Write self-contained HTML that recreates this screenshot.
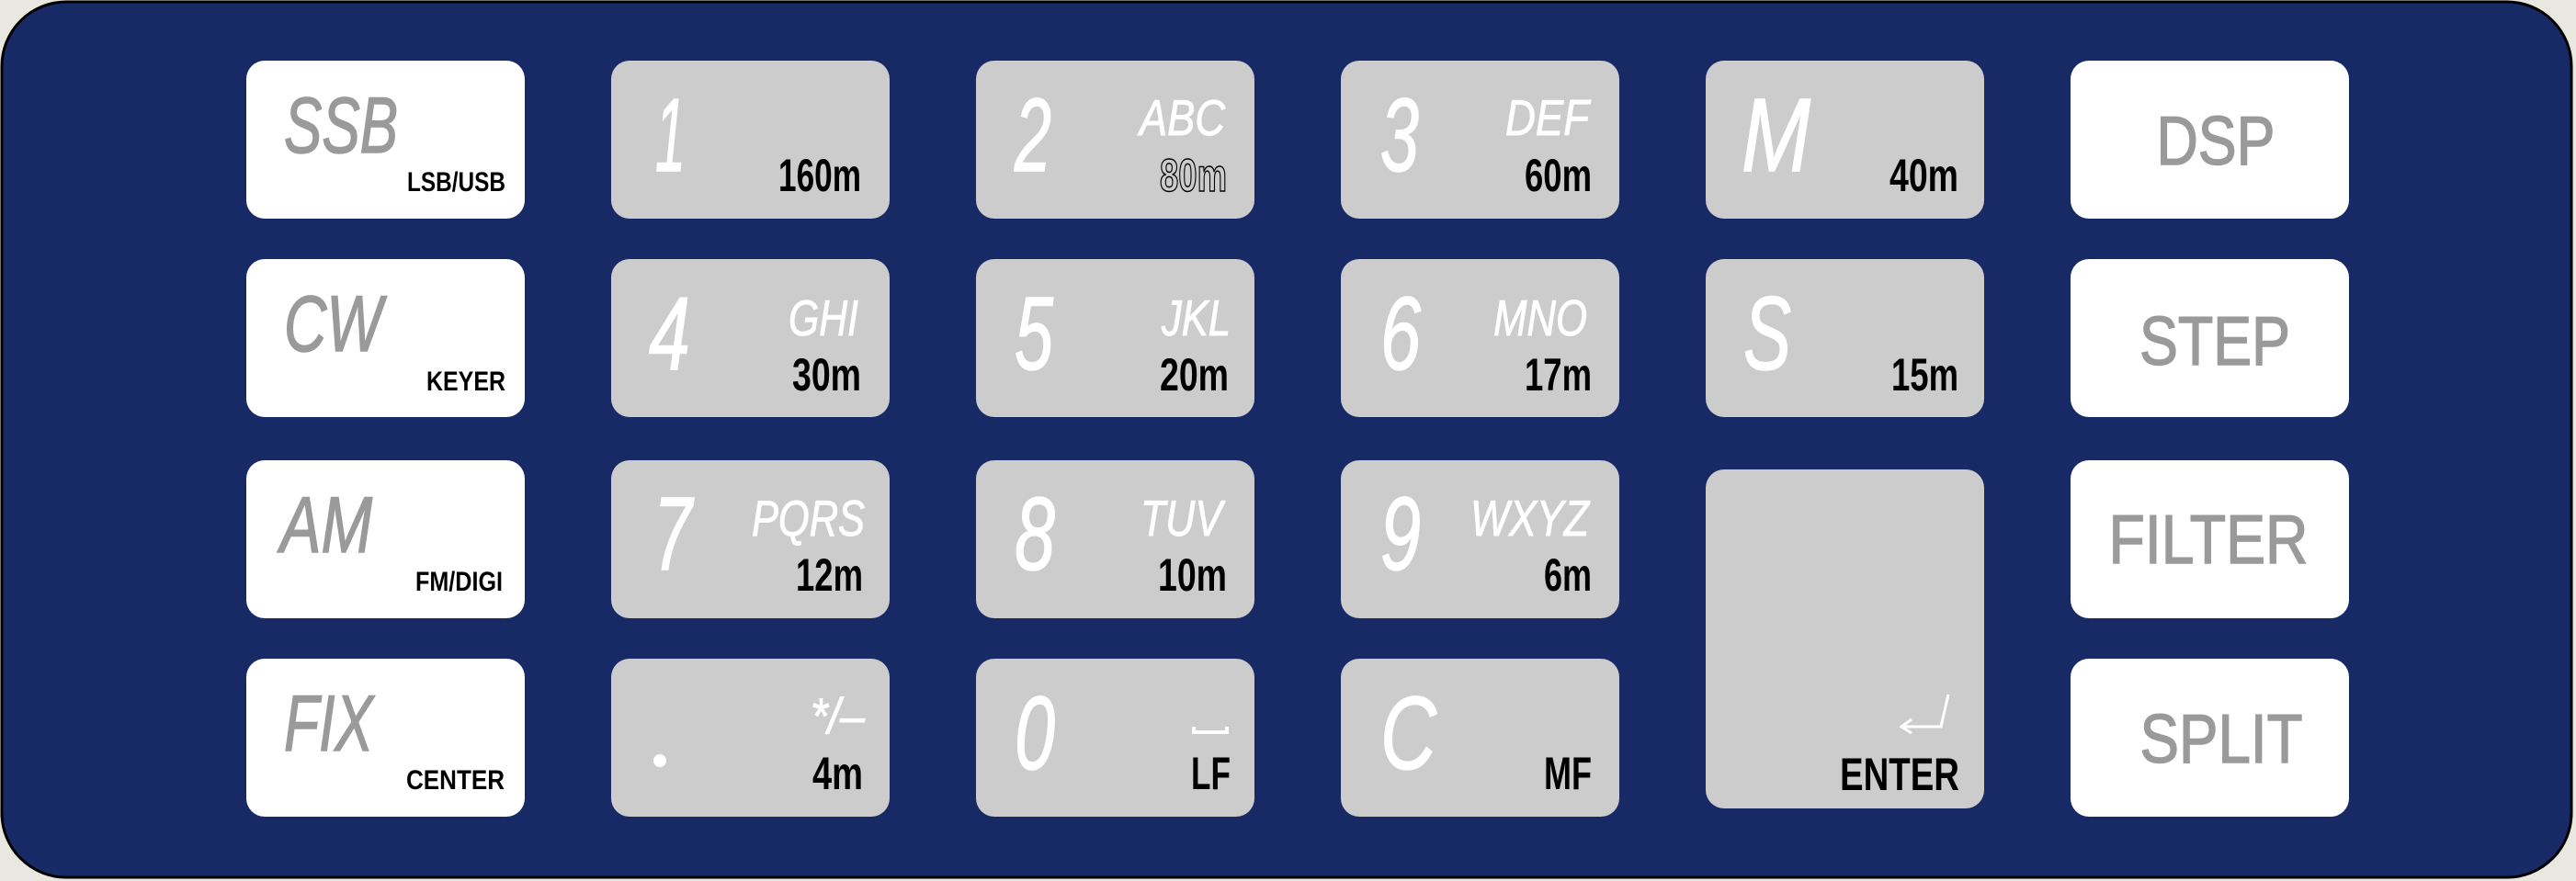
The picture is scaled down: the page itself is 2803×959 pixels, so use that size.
<!DOCTYPE html>
<html><head><meta charset="utf-8"><style>
html,body{margin:0;padding:0;background:#e8e8e0;}
svg{display:block;}
text{font-family:"Liberation Sans",sans-serif;}
.big{font-size:86px;font-style:italic;fill:#9a9a9a;stroke:#9a9a9a;stroke-width:1.5;}
.sub{font-size:30px;font-weight:bold;fill:#000;}
.dig{font-size:113px;font-style:italic;fill:#fff;stroke:#fff;stroke-width:1.5;}
.let{font-size:55px;font-style:italic;fill:#fff;stroke:#fff;stroke-width:1;}
.band{font-size:50px;font-weight:bold;fill:#000;}
.rt{font-size:75px;fill:#9a9a9a;stroke:#9a9a9a;stroke-width:1.5;}
.w{fill:#fff;}
.g{fill:#cccccc;}
</style></head><body>
<svg width="2803" height="959" viewBox="0 0 2803 959" xmlns="http://www.w3.org/2000/svg">
<rect x="0" y="0" width="2803" height="959" fill="#e8e8e0"/>
<rect x="2" y="2" width="2796" height="953" rx="70" ry="70" fill="#172a66" stroke="#000" stroke-width="3"/>

<rect class="w" x="268" y="66" width="303" height="172" rx="20"/>
<rect class="w" x="268" y="282" width="303" height="172" rx="20"/>
<rect class="w" x="268" y="501" width="303" height="172" rx="20"/>
<rect class="w" x="268" y="717" width="303" height="172" rx="20"/>
<text class="big" x="309" y="166" textLength="124" lengthAdjust="spacingAndGlyphs">SSB</text>
<text class="sub" x="550" y="208" text-anchor="end" textLength="107" lengthAdjust="spacingAndGlyphs">LSB/USB</text>
<text class="big" x="309" y="382" textLength="107" lengthAdjust="spacingAndGlyphs">CW</text>
<text class="sub" x="550" y="425" text-anchor="end" textLength="86" lengthAdjust="spacingAndGlyphs">KEYER</text>
<text class="big" x="305" y="601" textLength="100" lengthAdjust="spacingAndGlyphs">AM</text>
<text class="sub" x="547" y="643" text-anchor="end" textLength="95" lengthAdjust="spacingAndGlyphs">FM/DIGI</text>
<text class="big" x="309" y="817" textLength="97" lengthAdjust="spacingAndGlyphs">FIX</text>
<text class="sub" x="549" y="859" text-anchor="end" textLength="107" lengthAdjust="spacingAndGlyphs">CENTER</text>

<g class="g">
<rect x="665" y="66" width="303" height="172" rx="20"/>
<rect x="1062" y="66" width="303" height="172" rx="20"/>
<rect x="1459" y="66" width="303" height="172" rx="20"/>
<rect x="1856" y="66" width="303" height="172" rx="20"/>
<rect x="665" y="282" width="303" height="172" rx="20"/>
<rect x="1062" y="282" width="303" height="172" rx="20"/>
<rect x="1459" y="282" width="303" height="172" rx="20"/>
<rect x="1856" y="282" width="303" height="172" rx="20"/>
<rect x="665" y="501" width="303" height="172" rx="20"/>
<rect x="1062" y="501" width="303" height="172" rx="20"/>
<rect x="1459" y="501" width="303" height="172" rx="20"/>
<rect x="1856" y="511" width="303" height="369" rx="20"/>
<rect x="665" y="717" width="303" height="172" rx="20"/>
<rect x="1062" y="717" width="303" height="172" rx="20"/>
<rect x="1459" y="717" width="303" height="172" rx="20"/>
</g>

<text class="dig" x="713" y="186" textLength="33" lengthAdjust="spacingAndGlyphs">1</text>
<text class="band" x="937" y="208" text-anchor="end" textLength="90" lengthAdjust="spacingAndGlyphs">160m</text>
<text class="dig" x="1104" y="186" textLength="40" lengthAdjust="spacingAndGlyphs">2</text>
<text class="let" x="1333" y="147" text-anchor="end" textLength="93" lengthAdjust="spacingAndGlyphs">ABC</text>
<text class="band" x="1335" y="208" text-anchor="end" textLength="73" lengthAdjust="spacingAndGlyphs" style="fill:#cccccc;stroke:#000;stroke-width:1.5">80m</text>
<text class="dig" x="1502" y="186" textLength="42" lengthAdjust="spacingAndGlyphs">3</text>
<text class="let" x="1729" y="147" text-anchor="end" textLength="91" lengthAdjust="spacingAndGlyphs">DEF</text>
<text class="band" x="1732" y="208" text-anchor="end" textLength="73" lengthAdjust="spacingAndGlyphs">60m</text>
<text class="dig" x="1895" y="186" textLength="75" lengthAdjust="spacingAndGlyphs">M</text>
<text class="band" x="2131" y="208" text-anchor="end" textLength="75" lengthAdjust="spacingAndGlyphs">40m</text>

<text class="dig" x="706" y="402" textLength="45" lengthAdjust="spacingAndGlyphs">4</text>
<text class="let" x="934" y="365" text-anchor="end" textLength="76" lengthAdjust="spacingAndGlyphs">GHI</text>
<text class="band" x="937" y="425" text-anchor="end" textLength="75" lengthAdjust="spacingAndGlyphs">30m</text>
<text class="dig" x="1104" y="402" textLength="42" lengthAdjust="spacingAndGlyphs">5</text>
<text class="let" x="1339" y="365" text-anchor="end" textLength="75" lengthAdjust="spacingAndGlyphs">JKL</text>
<text class="band" x="1337" y="425" text-anchor="end" textLength="75" lengthAdjust="spacingAndGlyphs">20m</text>
<text class="dig" x="1502" y="402" textLength="44" lengthAdjust="spacingAndGlyphs">6</text>
<text class="let" x="1727" y="365" text-anchor="end" textLength="102" lengthAdjust="spacingAndGlyphs">MNO</text>
<text class="band" x="1732" y="425" text-anchor="end" textLength="73" lengthAdjust="spacingAndGlyphs">17m</text>
<text class="dig" x="1897" y="402" textLength="52" lengthAdjust="spacingAndGlyphs">S</text>
<text class="band" x="2131" y="425" text-anchor="end" textLength="73" lengthAdjust="spacingAndGlyphs">15m</text>

<text class="dig" x="711" y="620" textLength="42" lengthAdjust="spacingAndGlyphs">7</text>
<text class="let" x="941" y="583" text-anchor="end" textLength="123" lengthAdjust="spacingAndGlyphs">PQRS</text>
<text class="band" x="939" y="643" text-anchor="end" textLength="73" lengthAdjust="spacingAndGlyphs">12m</text>
<text class="dig" x="1104" y="620" textLength="44" lengthAdjust="spacingAndGlyphs">8</text>
<text class="let" x="1330" y="583" text-anchor="end" textLength="89" lengthAdjust="spacingAndGlyphs">TUV</text>
<text class="band" x="1335" y="643" text-anchor="end" textLength="75" lengthAdjust="spacingAndGlyphs">10m</text>
<text class="dig" x="1502" y="620" textLength="44" lengthAdjust="spacingAndGlyphs">9</text>
<text class="let" x="1729" y="583" text-anchor="end" textLength="129" lengthAdjust="spacingAndGlyphs">WXYZ</text>
<text class="band" x="1732" y="643" text-anchor="end" textLength="52" lengthAdjust="spacingAndGlyphs">6m</text>

<circle cx="718" cy="828" r="7" fill="#fff"/>
<text class="let" x="941" y="798" text-anchor="end" textLength="59" lengthAdjust="spacingAndGlyphs">*/–</text>
<text class="band" x="939" y="859" text-anchor="end" textLength="55" lengthAdjust="spacingAndGlyphs">4m</text>
<text class="dig" x="1104" y="837" textLength="44" lengthAdjust="spacingAndGlyphs">0</text>
<path d="M1299 791 V797 H1335 V791" fill="none" stroke="#fff" stroke-width="4"/>
<text class="band" x="1339" y="859" text-anchor="end" textLength="43" lengthAdjust="spacingAndGlyphs">LF</text>
<text class="dig" x="1502" y="837" textLength="61" lengthAdjust="spacingAndGlyphs">C</text>
<text class="band" x="1732" y="859" text-anchor="end" textLength="52" lengthAdjust="spacingAndGlyphs">MF</text>

<path d="M2120 756 L2112 791 H2071 M2080 783 L2069 791 L2080 798" fill="none" stroke="#fff" stroke-width="3"/>
<text class="band" x="2132" y="860" text-anchor="end" textLength="130" lengthAdjust="spacingAndGlyphs">ENTER</text>

<rect class="w" x="2253" y="66" width="303" height="172" rx="20"/>
<rect class="w" x="2253" y="282" width="303" height="172" rx="20"/>
<rect class="w" x="2253" y="501" width="303" height="172" rx="20"/>
<rect class="w" x="2253" y="717" width="303" height="172" rx="20"/>
<text class="rt" x="2411" y="179" text-anchor="middle" textLength="129" lengthAdjust="spacingAndGlyphs">DSP</text>
<text class="rt" x="2410" y="397" text-anchor="middle" textLength="164" lengthAdjust="spacingAndGlyphs">STEP</text>
<text class="rt" x="2403" y="613" text-anchor="middle" textLength="217" lengthAdjust="spacingAndGlyphs">FILTER</text>
<text class="rt" x="2417" y="830" text-anchor="middle" textLength="177" lengthAdjust="spacingAndGlyphs">SPLIT</text>
</svg>
</body></html>
